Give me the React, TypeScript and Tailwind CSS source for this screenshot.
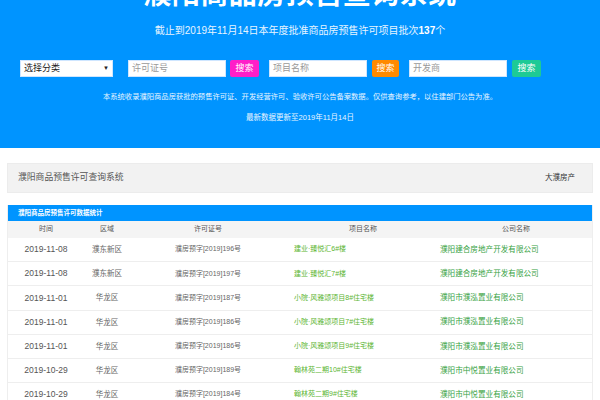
import React from 'react';

const rows = [
  { date: '2019-11-08', area: '濮东新区', permit: '濮房预字[2019]196号', project: '建业·臻悦汇6#楼', company: '濮阳建合房地产开发有限公司' },
  { date: '2019-11-08', area: '濮东新区', permit: '濮房预字[2019]197号', project: '建业·臻悦汇7#楼', company: '濮阳建合房地产开发有限公司' },
  { date: '2019-11-01', area: '华龙区', permit: '濮房预字[2019]187号', project: '小院·风雅颂项目8#住宅楼', company: '濮阳市濮泓置业有限公司' },
  { date: '2019-11-01', area: '华龙区', permit: '濮房预字[2019]186号', project: '小院·风雅颂项目7#住宅楼', company: '濮阳市濮泓置业有限公司' },
  { date: '2019-11-01', area: '华龙区', permit: '濮房预字[2019]186号', project: '小院·风雅颂项目9#住宅楼', company: '濮阳市濮泓置业有限公司' },
  { date: '2019-10-29', area: '华龙区', permit: '濮房预字[2019]189号', project: '翰林苑二期10#住宅楼', company: '濮阳市中悦置业有限公司' },
  { date: '2019-10-29', area: '华龙区', permit: '濮房预字[2019]184号', project: '翰林苑二期9#住宅楼', company: '濮阳市中悦置业有限公司' },
];

const font = "font-['Liberation_Sans','Noto_Sans_CJK_SC',sans-serif]";

const SearchBox: React.FC<{ placeholder: string; btn: string; btnClass: string; gap: string }> = ({ placeholder, btn, btnClass, gap }) => (
  <div className={`flex items-center ${gap}`}>
    <div className="w-[98px] h-[17px] bg-white border border-[#cfe6ff] flex items-center px-[3px] text-[9px] text-[#999]">{placeholder}</div>
    <div className={`h-[17px] flex items-center justify-center text-[9px] text-white rounded-[2px] ${btnClass}`}>{btn}</div>
  </div>
);

const App: React.FC = () => {
  return (
    <div className={`w-[600px] h-[400px] overflow-hidden bg-white ${font}`}>
      {/* Header banner */}
      <section className="bg-[#0094ff] flex flex-col items-center pb-[25px]">
        <h1 className="-mt-[19px] h-[28px] leading-[28px] text-[28px] font-bold text-white tracking-[0.5px]">濮阳商品房预售查询系统</h1>
        <p className="mt-[15px] leading-[14px] text-[10px] text-[#e8f4ff]">
          截止到2019年11月14日本年度批准商品房预售许可项目批次<b className="text-white">137</b>个
        </p>
        <div className="mt-[22px] self-start pl-[20px] flex items-center">
          <div className="w-[93px] h-[17px] bg-white border border-[#cfe6ff] flex items-center justify-between px-[3px] text-[9px] text-[#222]">
            <span>选择分类</span>
            <span className="text-[6px]">▼</span>
          </div>
          <div className="ml-[15px] flex items-center">
            <SearchBox placeholder="许可证号" btn="搜索" btnClass="w-[29px] bg-[#ff1ec8]" gap="gap-[4px]" />
            <div className="ml-[10px]">
              <SearchBox placeholder="项目名称" btn="搜索" btnClass="w-[27px] bg-[#ff8a00]" gap="gap-[5px]" />
            </div>
            <div className="ml-[10px]">
              <SearchBox placeholder="开发商" btn="搜索" btnClass="w-[29px] bg-[#1dca96]" gap="gap-[5px]" />
            </div>
          </div>
        </div>
        <p className="mt-[15px] leading-[10px] text-[7.3px] text-[#e8f4ff]">
          本系统收录濮阳商品房获批的预售许可证、开发经营许可、验收许可公告备案数据。仅供查询参考，以住建部门公告为准。
        </p>
        <p className="mt-[11px] leading-[10px] text-[7.5px] text-[#e8f4ff]">最新数据更新至2019年11月14日</p>
      </section>

      {/* Title panel */}
      <div className="mx-[7px] mt-[15px] h-[30px] bg-[#f2f2f2] border border-[#ececec] flex items-center justify-between pl-[10px] pr-[17px]">
        <span className="text-[8.8px] text-[#555]">濮阳商品预售许可查询系统</span>
        <span className="text-[7.5px] text-[#333]">大濮房产</span>
      </div>

      {/* Table */}
      <div className="mx-[7px] mt-[12px] border-x border-[#eeeeee]">
        <div className="h-[16px] bg-[#0094ff] flex items-center pl-[10px] text-[6.5px] font-bold text-white">濮阳商品房预售许可数据统计</div>
        <div className="h-[17px] bg-[#f4f4f4] grid grid-cols-[76px_46px_156px_154px_1fr] items-center text-[7px] text-[#555] text-center">
          <span>时间</span>
          <span>区域</span>
          <span>许可证号</span>
          <span>项目名称</span>
          <span>公司名称</span>
        </div>
        {rows.map((r, i) => (
          <div key={i} className="h-[24.2px] border-b border-[#eeeeee] grid grid-cols-[76px_46px_156px_154px_1fr] items-center">
            <span className="text-center text-[8.5px] text-[#555]">{r.date}</span>
            <span className="text-center text-[7.5px] text-[#666]">{r.area}</span>
            <span className="text-center text-[7px] text-[#666]">{r.permit}</span>
            <span className="pl-[8px] text-[7px] text-[#5cb531]">{r.project}</span>
            <span className="text-[7.6px] text-[#36a23f]">{r.company}</span>
          </div>
        ))}
      </div>
    </div>
  );
};

export default App;
